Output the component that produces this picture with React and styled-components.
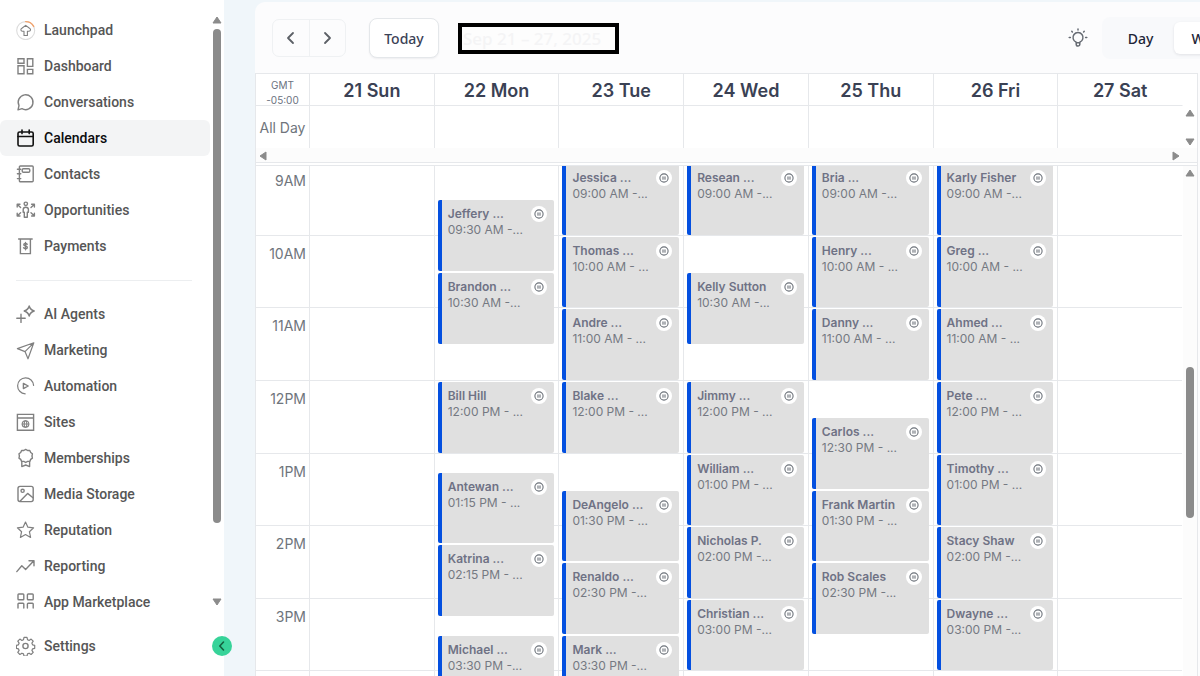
import React from 'react';
import styled, { createGlobalStyle } from 'styled-components';

const GlobalStyle = createGlobalStyle`
  * {
    box-sizing: border-box;
  }
  body {
    margin: 0;
    overflow: hidden;
    font-family: Inter, "Liberation Sans", sans-serif;
  }
  button {
    font-family: "Noto Sans", "Liberation Sans", sans-serif;
    padding: 0;
    border: none;
    background: none;
    cursor: pointer;
  }
`;

const line = '#e6e8eb';

const Page = styled.div`
  display: flex;
  height: 100vh;
  background: #f0f6fa;
`;

/* ---------- sidebar ---------- */

const Sidebar = styled.aside`
  display: flex;
  flex-direction: column;
  flex: 0 0 224px;
  background: #fff;
  font-family: Roboto, "Liberation Sans", sans-serif;
`;

const SidebarScroll = styled.div`
  display: flex;
  flex: 1;
  min-height: 0;
  padding-top: 12px;
`;

const Nav = styled.nav`
  flex: 1;
  overflow: hidden;
`;

const NavLink = styled.a`
  display: flex;
  align-items: center;
  gap: 8px;
  height: 36px;
  padding-left: 16px;
  border-radius: 6px;
  background: ${props => (props.$active ? '#f3f4f5' : 'transparent')};
  color: ${props => (props.$active ? '#0b0c0e' : '#565656')};
  font-size: 14px;
  font-weight: 500;
  line-height: 20px;
  text-decoration: none;

  svg {
    flex: none;
    color: ${props => (props.$active ? '#111' : '#808080')};
  }
`;

const Divider = styled.hr`
  height: 1px;
  margin: 16px 18px 15px 16px;
  border: none;
  background: #eceef0;
`;

const SidebarFooter = styled.div`
  display: flex;
  align-items: center;
  justify-content: space-between;
  height: 64px;
  padding-top: 3px;
`;

const CollapseButton = styled.button`
  display: flex;
  align-items: center;
  justify-content: center;
  flex: none;
  width: 20px;
  height: 20px;
  margin-right: -8px;
  border-radius: 50%;
  background: #37d399;
  color: #14603f;
  z-index: 1;
`;

/* ---------- scrollbars ---------- */

const ScrollTrack = styled.div`
  display: flex;
  flex-direction: column;
  align-items: center;
  flex: 0 0 14px;
  padding: ${props => props.$pad};
  background: ${props => props.$bg || 'transparent'};
`;

const ThumbArea = styled.div`
  flex: 1;
  width: 8px;
  margin: 4px 0 7px;
`;

const Thumb = styled.div`
  border-radius: 4px;
  background: #8b8b8b;
`;

/* ---------- calendar ---------- */

const Main = styled.main`
  display: flex;
  flex-direction: column;
  flex: 1;
  min-width: 0;
  margin: 2px 0 0 31px;
  border-radius: 10px 0 0 0;
  background: #fcfcfd;
  overflow: hidden;
`;

const Toolbar = styled.header`
  display: flex;
  align-items: center;
  flex: none;
  height: 71px;
  padding: 1px 0 0 17px;
`;

const ArrowGroup = styled.div`
  display: flex;
  height: 38px;
  border: 1px solid #eff1f3;
  border-radius: 7px;
`;

const ArrowButton = styled.button`
  display: flex;
  align-items: center;
  justify-content: center;
  width: 36px;
  color: #5c6066;

  & + & {
    border-left: 1px solid #eff1f3;
  }
`;

const TodayButton = styled.button`
  width: 70px;
  height: 40px;
  margin: 0 19px 0 23px;
  border: 1px solid #e4e7ea;
  border-radius: 8px;
  background: #fff;
  box-shadow: 0 1px 2px rgba(16, 24, 40, 0.06);
  color: #3b4256;
  font-size: 14px;
  font-weight: 500;
`;

const DateRange = styled.div`
  display: flex;
  align-items: center;
  width: 161px;
  height: 31px;
  padding-left: 1px;
  border: 4px solid #000;
  background: #fdfdfd;
  color: #f4f4f5;
  font-family: "Noto Sans", "Liberation Sans", sans-serif;
  font-size: 17px;
  font-weight: 500;
  white-space: nowrap;
`;

const HintButton = styled.button`
  display: flex;
  margin-left: auto;
  margin-right: 14px;
  color: #666b73;
`;

const ViewSwitch = styled.div`
  display: flex;
  align-items: center;
  flex: 0 0 98px;
  height: 42px;
  border-radius: 8px 0 0 8px;
  background: #f8f9fb;
  overflow: hidden;
`;

const ViewButton = styled.button`
  flex: none;
  width: 72px;
  height: 32px;
  padding-left: ${props => (props.$active ? '0' : '5px')};
  border-radius: 6px;
  background: ${props => (props.$active ? '#fff' : 'transparent')};
  box-shadow: ${props => (props.$active ? '0 1px 3px rgba(16, 24, 40, 0.1)' : 'none')};
  color: #1d2536;
  font-size: 14px;
  font-weight: 500;
`;

const Board = styled.section`
  display: flex;
  flex-direction: column;
  flex: 1;
  min-height: 0;
  margin-right: 2px;
  border: 1px solid ${line};
  border-bottom: none;
  background: #fff;
`;

const WeekGrid = styled.div`
  display: grid;
  grid-template-columns: 54px repeat(7, 1fr);
  flex: 1;
`;

const TopRows = styled.div`
  display: flex;
  flex: none;
`;

const HeadCell = styled.div`
  height: 32px;
  border-right: 1px solid ${line};
  border-bottom: 1px solid ${line};
  color: #3a4154;
  font-size: 18px;
  font-weight: 600;
  line-height: 34px;
  text-align: center;
  white-space: nowrap;

  &:nth-child(8n) {
    border-right-color: transparent;
  }
`;

const ZoneCell = styled(HeadCell)`
  padding-top: 4px;
  color: #6b7280;
  font-size: 10px;
  font-weight: 400;
  line-height: 15px;
`;

const AllDayCell = styled.div`
  height: 42px;
  border-right: 1px solid ${line};
  color: #6f757c;
  font-size: 14px;
  line-height: 44px;
  text-align: center;

  &:nth-child(8n) {
    border-right-color: transparent;
  }
`;

const HeaderScroll = styled.div`
  display: flex;
  flex-direction: column;
  align-items: center;
  justify-content: space-between;
  flex: 0 0 14px;
  padding: 34px 0 1px;
`;

const HorizontalTrack = styled.div`
  display: flex;
  align-items: center;
  justify-content: space-between;
  flex: none;
  height: 15px;
  padding: 1px 16px 0 2px;
  border-bottom: 1px solid ${line};
  background: #fcfcfc;
`;

const Body = styled.div`
  display: flex;
  flex: 1;
  min-height: 0;
  margin-top: 2px;
  border-top: 1px solid ${line};
`;

const BodyViewport = styled.div`
  flex: 1;
  min-width: 0;
  overflow: hidden;
`;

/* the view is scrolled slightly past 9AM */
const Hours = styled(WeekGrid)`
  height: 581px;
  margin-top: -3px;
`;

const Column = styled.div`
  display: grid;
  grid-template-columns: minmax(0, 1fr);
  grid-template-rows: repeat(32, 1fr);
  border-right: 1px solid ${line};

  &:last-child {
    border-right-color: transparent;
  }
`;

const HourCell = styled.div`
  grid-column: 1;
  grid-row: ${props => props.$hour * 4 + 1} / span 4;
  padding: 8px 3px 0 0;
  border-bottom: 1px solid ${line};
  color: #6f757c;
  font-size: 14px;
  line-height: 20px;
  text-align: right;
`;

const EventCard = styled.article`
  display: flex;
  align-items: flex-start;
  justify-content: space-between;
  grid-column: 1;
  grid-row: ${props => props.$slot + 1} / span 4;
  margin: 1px 4px 1px 3px;
  padding: 6px 7px 0 6px;
  border-left: 4px solid #0450e0;
  border-radius: 2px;
  background: #e0e0e0;
  z-index: 1;
`;

const EventText = styled.div`
  font-size: 12px;
  line-height: 16px;
  white-space: nowrap;
  color: #757982;
`;

const EventName = styled.div`
  color: #6f7285;
  font-weight: 600;
`;

const Badge = styled.span`
  display: flex;
  align-items: center;
  justify-content: center;
  flex: none;
  width: 16px;
  height: 16px;
  border-radius: 50%;
  background: #fff;
  color: #6c727a;
`;

/* ---------- icons ---------- */

const Icon = ({ children, size = 20, width = 1.4, box = 20 }) => (
  <svg
    width={size}
    height={size}
    viewBox={`0 0 ${box} ${box}`}
    fill="none"
    stroke="currentColor"
    strokeWidth={width}
    strokeLinecap="round"
    strokeLinejoin="round"
    aria-hidden="true"
  >
    {children}
  </svg>
);

const icons = {
  launchpad: (
    <>
      <circle cx="9.7" cy="10.6" r="9" stroke="#dcdcdc" strokeWidth="1.1" />
      <path d="M9.7 1.6a9 9 0 0 1 8 4.8" stroke="#f3a068" />
      <path d="M8 15.5v-4.2H6.4a1.6 1.6 0 0 1-.5-3.1L9.7 5.4l3.8 2.8a1.6 1.6 0 0 1-.5 3.1h-1.6v4.2z" strokeWidth="1.1" />
    </>
  ),
  dashboard: (
    <path d="M2 2.8h6v4.4H2zM11.4 2.8h5.4v7.6h-5.4zM2 9.8h6v8H2zM11.4 13.4h5.4v4.4h-5.4z" strokeLinejoin="miter" />
  ),
  chat: <path d="M2 17.8l1-4.2a7.4 7.4 0 1 1 3 3.1z" />,
  calendar: (
    <>
      <rect x="2" y="4" width="15.2" height="14" rx="1.6" />
      <path d="M2 8.5h15.2M6 2v3.6M13.2 2v3.6" />
    </>
  ),
  contacts: (
    <>
      <rect x="3.4" y="2" width="13.8" height="15.8" rx="1" />
      <rect x="6.2" y="4.8" width="7.6" height="3.4" rx="1.2" />
      <path d="M1.4 5.2h3.4M1.4 9.8h3.4M1.4 14.6h3.4" />
    </>
  ),
  opportunities: (
    <>
      <circle cx="9.8" cy="3.8" r="1.7" />
      <path d="M7.2 9.4c0-1.400 1-2.200 2.600-2.200s2.600.8 2.600 2.200v2.800h-1.100v5H8.300v-5H7.200z" />
      <path d="M4.600 7.400L1.400 4.400M1.200 7V4.200H4M15 7.400l3.200-3M15.600 4.200h2.800V7M4.600 12.800l-3.200 3M1.200 13.200V16H4M15 12.800l3.200 3M15.600 16h2.800v-2.800" />
    </>
  ),
  payments: (
    <>
      <path d="M2.6 3h13.600M4.400 3v14.600h10V3" strokeLinejoin="miter" />
      <path d="M11.200 8.200c-.5-.6-1-.8-1.800-.8-1 0-1.600.5-1.600 1.300 0 1.800 3.500.9 3.500 2.700 0 .8-.7 1.300-1.700 1.300-.9 0-1.500-.3-2-.9M9.500 6.400v7.400" />
    </>
  ),
  agents: (
    <>
      <path d="M13.2 2c.8 3 1.800 4 5 5-3.200 1-4.200 2-5 5-.8-3-1.800-4-5-5 3.200-1 4.200-2 5-5z" />
      <path d="M5 10.200v8.200M.8 14.300h8.400" />
    </>
  ),
  marketing: <path d="M17.800 2.800L1.400 8.600l7.600 3 3 7.200zM17.800 2.800L9 11.600" strokeWidth="1.200" />,
  automation: (
    <>
      <path d="M9.200 17.800A8 8 0 1 1 17.600 9.400" strokeWidth="1.200" />
      <path d="M7.400 7.400v5.200l4.800-2.600z" />
    </>
  ),
  sites: (
    <>
      <path d="M1.400 2.400h16.200v15.800H1.400zM1.400 6h16.200" strokeLinejoin="miter" />
      <g strokeWidth="1.100">
        <circle cx="9.500" cy="12" r="3.300" />
        <ellipse cx="9.500" cy="12" rx="1.300" ry="3.300" />
        <path d="M6.200 12h6.600" />
      </g>
    </>
  ),
  memberships: (
    <>
      <path d="M9.700 1.400l1.900 1.100 2.200 0 .9 2 1.700 1.300-.4 2.200.4 2.100-1.700 1.300-.9 2-2.200 0-1.900 1.100-1.900-1.100-2.200 0-.9-2L3 10.100l.4-2.100L3 5.800l1.700-1.300.9-2 2.200 0z" />
      <path d="M5.800 13.600v5l3.900-1.600 3.900 1.600v-5" />
    </>
  ),
  media: (
    <>
      <rect x="2" y="2.400" width="15.200" height="15.200" rx="2" />
      <circle cx="6.600" cy="6.800" r="1.600" />
      <path d="M4 17.200l7.600-7.800 5.400 4.400" />
    </>
  ),
  reputation: (
    <path
      d="M9.500 2l2.400 5.200 5.700.6-4.200 3.900 1.200 5.700-5.100-2.900-5.100 2.900 1.200-5.700L1.400 7.800l5.700-.6z"
      strokeWidth="1.200"
    />
  ),
  reporting: <path d="M.8 15.600l5-5.800 3.800 3.600 8-8.400M13 4.800h5v5" />,
  marketplace: (
    <>
      <rect x="2" y="2" width="5.800" height="5.800" rx=".8" />
      <rect x="11.400" y="2" width="5.800" height="5.800" rx=".8" />
      <path d="M2 16v-4q0-.8.8-.8h4.200q.8 0 .8.800v4M11.400 16v-4q0-.8.800-.8h4.200q.8 0 .8.800v4" />
    </>
  ),
  settings: (
    <>
      <circle cx="9.500" cy="10" r="2.600" />
      <path
        d="M8 1.400h3l.5 2.300 1.600.7 2-1.300 2.100 2.100-1.300 2 .7 1.600 2.100.5v3l-2.100.5-.7 1.600 1.300 2-2.100 2.100-2-1.300-1.600.7-.5 2.300H8l-.5-2.300-1.600-.7-2 1.300-2.100-2.100 1.300-2-.7-1.600-2-.5v-3l2-.5.7-1.600-1.300-2L3.900 3.100l2 1.300 1.600-.7z"
        strokeWidth="1.200"
      />
    </>
  ),
};

const Triangle = ({ dir }) => {
  const turn = { up: 0, right: 90, down: 180, left: 270 }[dir];
  return (
    <svg width="10" height="10" viewBox="0 0 10 10" aria-hidden="true">
      <path
        d="M5 2L9 8H1z"
        fill="#8b8b8b"
        stroke="#8b8b8b"
        strokeLinejoin="round"
        transform={`rotate(${turn} 5 5)`}
      />
    </svg>
  );
};

/* ---------- data ---------- */

const primaryNav = [
  ['launchpad', 'Launchpad'],
  ['dashboard', 'Dashboard'],
  ['chat', 'Conversations'],
  ['calendar', 'Calendars'],
  ['contacts', 'Contacts'],
  ['opportunities', 'Opportunities'],
  ['payments', 'Payments'],
];

const secondaryNav = [
  ['agents', 'AI Agents'],
  ['marketing', 'Marketing'],
  ['automation', 'Automation'],
  ['sites', 'Sites'],
  ['memberships', 'Memberships'],
  ['media', 'Media Storage'],
  ['reputation', 'Reputation'],
  ['reporting', 'Reporting'],
  ['marketplace', 'App Marketplace'],
];

// the last row is only just in view, so it carries no label
const hours = ['9AM', '10AM', '11AM', '12PM', '1PM', '2PM', '3PM', ''];

// slot = quarter hours after 9AM
const days = [
  { label: '21 Sun', events: [] },
  {
    label: '22 Mon',
    events: [
      { slot: 2, name: 'Jeffery ...', time: '09:30 AM -...' },
      { slot: 6, name: 'Brandon ...', time: '10:30 AM -...' },
      { slot: 12, name: 'Bill Hill', time: '12:00 PM - ...' },
      { slot: 17, name: 'Antewan ...', time: '01:15 PM - ...' },
      { slot: 21, name: 'Katrina ...', time: '02:15 PM - ...' },
      { slot: 26, name: 'Michael ...', time: '03:30 PM -...' },
    ],
  },
  {
    label: '23 Tue',
    events: [
      { slot: 0, name: 'Jessica ...', time: '09:00 AM -...' },
      { slot: 4, name: 'Thomas ...', time: '10:00 AM - ...' },
      { slot: 8, name: 'Andre ...', time: '11:00 AM - ...' },
      { slot: 12, name: 'Blake ...', time: '12:00 PM - ...' },
      { slot: 18, name: 'DeAngelo ...', time: '01:30 PM - ...' },
      { slot: 22, name: 'Renaldo ...', time: '02:30 PM -...' },
      { slot: 26, name: 'Mark ...', time: '03:30 PM -...' },
    ],
  },
  {
    label: '24 Wed',
    events: [
      { slot: 0, name: 'Resean ...', time: '09:00 AM -...' },
      { slot: 6, name: 'Kelly Sutton', time: '10:30 AM -...' },
      { slot: 12, name: 'Jimmy ...', time: '12:00 PM - ...' },
      { slot: 16, name: 'William ...', time: '01:00 PM - ...' },
      { slot: 20, name: 'Nicholas P.', time: '02:00 PM -...' },
      { slot: 24, name: 'Christian ...', time: '03:00 PM -...' },
    ],
  },
  {
    label: '25 Thu',
    events: [
      { slot: 0, name: 'Bria ...', time: '09:00 AM -...' },
      { slot: 4, name: 'Henry ...', time: '10:00 AM - ...' },
      { slot: 8, name: 'Danny ...', time: '11:00 AM - ...' },
      { slot: 14, name: 'Carlos ...', time: '12:30 PM - ...' },
      { slot: 18, name: 'Frank Martin', time: '01:30 PM - ...' },
      { slot: 22, name: 'Rob Scales', time: '02:30 PM -...' },
    ],
  },
  {
    label: '26 Fri',
    events: [
      { slot: 0, name: 'Karly Fisher', time: '09:00 AM -...' },
      { slot: 4, name: 'Greg ...', time: '10:00 AM - ...' },
      { slot: 8, name: 'Ahmed ...', time: '11:00 AM - ...' },
      { slot: 12, name: 'Pete ...', time: '12:00 PM - ...' },
      { slot: 16, name: 'Timothy ...', time: '01:00 PM - ...' },
      { slot: 20, name: 'Stacy Shaw', time: '02:00 PM -...' },
      { slot: 24, name: 'Dwayne ...', time: '03:00 PM -...' },
    ],
  },
  { label: '27 Sat', events: [] },
];

/* ---------- components ---------- */

const NavItem = ({ icon, label, active }) => (
  <NavLink href="#" $active={active} aria-current={active ? 'page' : undefined}>
    <Icon width={active ? 1.6 : 1.4}>{icons[icon]}</Icon>
    {label}
  </NavLink>
);

const VerticalScroll = ({ start, size, endArrow, ...rest }) => (
  <ScrollTrack {...rest}>
    <Triangle dir="up" />
    <ThumbArea>
      <div style={{ height: `${start}%` }} />
      <Thumb style={{ height: `${size}%` }} />
    </ThumbArea>
    {endArrow && <Triangle dir="down" />}
  </ScrollTrack>
);

const Event = ({ slot, name, time }) => (
  <EventCard $slot={slot}>
    <EventText>
      <EventName>{name}</EventName>
      {time}
    </EventText>
    <Badge>
      <Icon size={10} box={10} width={1.1}>
        <circle cx="5" cy="5" r="4.1" />
        <path d="M4 3.8v2.400M6 3.800v2.400" />
      </Icon>
    </Badge>
  </EventCard>
);

export default function App() {
  return (
    <Page>
      <GlobalStyle />
      <Sidebar>
        <SidebarScroll>
          <Nav>
            {primaryNav.map(([icon, label]) => (
              <NavItem key={label} icon={icon} label={label} active={label === 'Calendars'} />
            ))}
            <Divider />
            {secondaryNav.map(([icon, label]) => (
              <NavItem key={label} icon={icon} label={label} />
            ))}
          </Nav>
          <VerticalScroll start={0} size={88} endArrow $pad="3px 0 5px" />
        </SidebarScroll>
        <SidebarFooter>
          <NavItem icon="settings" label="Settings" />
          <CollapseButton aria-label="Collapse sidebar">
            <Icon size={12} box={12} width={1.6}>
              <path d="M7.500 2L3.800 6l3.700 4" />
            </Icon>
          </CollapseButton>
        </SidebarFooter>
      </Sidebar>

      <Main>
        <Toolbar>
          <ArrowGroup>
            <ArrowButton aria-label="Previous week">
              <Icon size={16} box={16} width={1.8}>
                <path d="M10 3L5 8l5 5" />
              </Icon>
            </ArrowButton>
            <ArrowButton aria-label="Next week">
              <Icon size={16} box={16} width={1.8}>
                <path d="M5 3l5 5-5 5" />
              </Icon>
            </ArrowButton>
          </ArrowGroup>
          <TodayButton>Today</TodayButton>
          <DateRange>Sep 21 – 27, 2025</DateRange>
          <HintButton aria-label="Tips">
            <Icon width={1.5}>
              <path d="M8.200 14.200a5 5 0 1 1 3.600 0v2a1.800 1.800 0 0 1-3.600 0zM8.400 14.800h3.200M10 1v.9M3.800 3.400l.6.600M16.200 3.400l-.6.600M1.200 9.600h1.200M17.600 9.600h1.200" />
            </Icon>
          </HintButton>
          <ViewSwitch>
            <ViewButton>Day</ViewButton>
            <ViewButton $active>Week</ViewButton>
          </ViewSwitch>
        </Toolbar>

        <Board>
          <TopRows>
            <WeekGrid>
              <ZoneCell>
                GMT
                <br />
                -05:00
              </ZoneCell>
              {days.map(day => (
                <HeadCell key={day.label}>{day.label}</HeadCell>
              ))}
              <AllDayCell>All Day</AllDayCell>
              {days.map(day => (
                <AllDayCell key={day.label} />
              ))}
            </WeekGrid>
            <HeaderScroll>
              <Triangle dir="up" />
              <Triangle dir="down" />
            </HeaderScroll>
          </TopRows>
          <HorizontalTrack>
            <Triangle dir="left" />
            <Triangle dir="right" />
          </HorizontalTrack>
          <Body>
            <BodyViewport>
              <Hours>
                <Column>
                  {hours.map((hour, i) => (
                    <HourCell key={i} $hour={i}>{hour}</HourCell>
                  ))}
                </Column>
                {days.map(day => (
                  <Column key={day.label}>
                    {hours.map((hour, i) => (
                      <HourCell key={i} $hour={i} />
                    ))}
                    {day.events.map(event => (
                      <Event key={event.slot} {...event} />
                    ))}
                  </Column>
                ))}
              </Hours>
            </BodyViewport>
            <VerticalScroll start={38} size={31} $pad="2px 0 0" $bg="#fcfcfc" />
          </Body>
        </Board>
      </Main>
    </Page>
  );
}
